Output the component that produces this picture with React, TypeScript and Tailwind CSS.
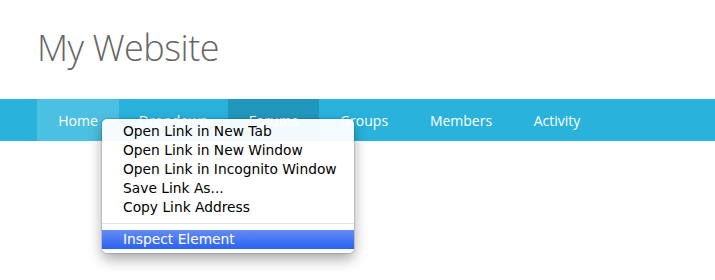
import React from "react";

const NAV_ITEMS = [
  { label: "Home", className: "w-[82px] bg-[#4cc0e2]" },
  { label: "Dropdown", className: "w-[109px]" },
  { label: "Forums", className: "w-[91px] bg-[#2297bd]" },
  { label: "Groups", className: "w-[90px]" },
  { label: "Members", className: "w-[104px]" },
  { label: "Activity", className: "w-[88px]" },
];

const MENU_ITEMS = [
  "Open Link in New Tab",
  "Open Link in New Window",
  "Open Link in Incognito Window",
  "Save Link As...",
  "Copy Link Address",
];

function ContextMenu() {
  return (
    <div className="absolute left-[102px] top-[119px] w-[252px] rounded-[5px] bg-[#ffffff]/95 pt-[3px] pb-[4px] shadow-[0_6px_14px_rgba(0,0,0,0.35),0_0_0_1px_rgba(0,0,0,0.12)] font-['DejaVu_Sans',sans-serif] text-[13.8px] text-black">
      {MENU_ITEMS.map((item) => (
        <div key={item} className="h-[19px] pl-[21px] leading-[19px]">
          {item}
        </div>
      ))}
      <div className="my-[6px] h-px bg-[#e3e3e3]" />
      <div className="h-[19px] bg-gradient-to-b from-[#648bf5] to-[#2a61f0] pl-[21px] leading-[19px] text-white">
        Inspect Element
      </div>
    </div>
  );
}

export default function App() {
  return (
    <div className="relative h-[280px] w-[715px] overflow-hidden bg-white font-['Open_Sans',sans-serif]">
      <header className="px-[37px] pt-[19px] pb-[22px]">
        <h1 className="text-[36px] font-light leading-[58px] tracking-[-0.5px] text-[#666666]">My Website</h1>
      </header>
      <nav className="flex h-[42px] bg-[#29b2dc] pl-[37px]">
        {NAV_ITEMS.map((item) => (
          <a
            key={item.label}
            className={`flex h-full items-center justify-center text-[14px] text-white ${item.className}`}
          >
            {item.label}
          </a>
        ))}
      </nav>
      <ContextMenu />
    </div>
  );
}
